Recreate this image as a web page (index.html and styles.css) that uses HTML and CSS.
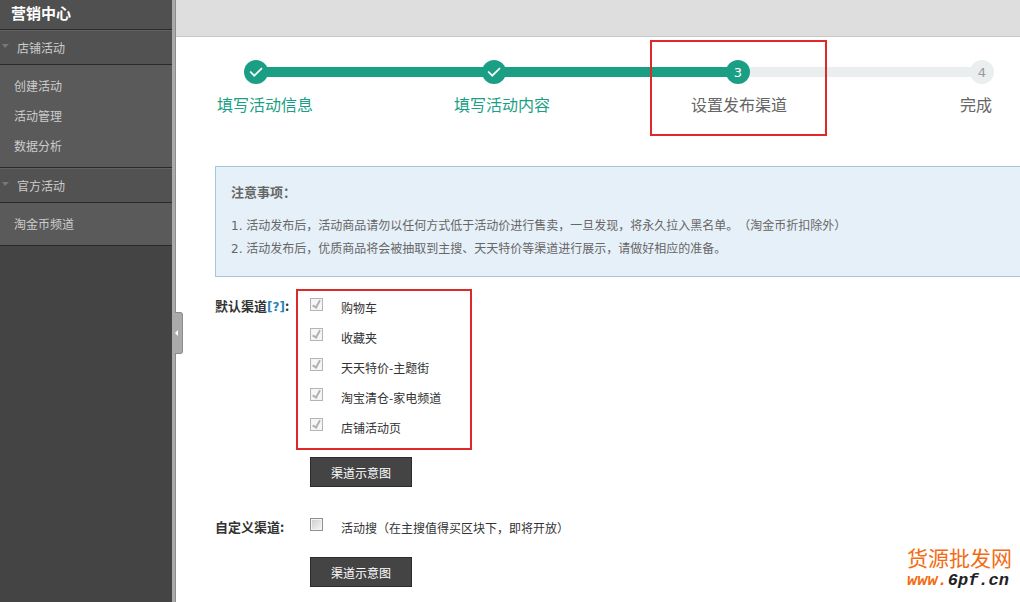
FILE: index.html
```html
<!DOCTYPE html>
<html lang="zh-CN">
<head>
    <meta charset="UTF-8">
    <meta name="viewport" content="width=device-width, initial-scale=1.0">
    <title>营销中心</title>
    <link rel="stylesheet" href="styles.css">
</head>
<body>

<aside class="sidebar">
    <h1>营销中心</h1>
    <nav>
        <h2>店铺活动</h2>
        <ul>
            <li><a href="#">创建活动</a></li>
            <li><a href="#">活动管理</a></li>
            <li><a href="#">数据分析</a></li>
        </ul>
        <h2>官方活动</h2>
        <ul>
            <li><a href="#">淘金币频道</a></li>
        </ul>
    </nav>
</aside>

<div class="splitter">
    <button type="button" class="toggle" aria-label="收起菜单"></button>
</div>

<div class="page">
    <header class="topbar"></header>

    <main>
        <section class="steps">
            <div class="track">
                <span class="node done"><svg width="14" height="12" viewBox="0 0 14 12"><path d="M1.2 5.5l4 4.2L13 2.2" fill="none" stroke="#fff" stroke-width="1.7"/></svg></span>
                <span class="line done first"></span>
                <span class="node done"><svg width="14" height="12" viewBox="0 0 14 12"><path d="M1.2 5.5l4 4.2L13 2.2" fill="none" stroke="#fff" stroke-width="1.7"/></svg></span>
                <span class="line done"></span>
                <span class="node done">3</span>
                <span class="line"></span>
                <span class="node">4</span>
            </div>
            <ol class="step-names">
                <li class="done">填写活动信息</li>
                <li class="done">填写活动内容</li>
                <li class="current">设置发布渠道</li>
                <li>完成</li>
            </ol>
        </section>

        <section class="notice">
            <h3>注意事项：</h3>
            <p>1. 活动发布后，活动商品请勿以任何方式低于活动价进行售卖，一旦发现，将永久拉入黑名单。（淘金币折扣除外）</p>
            <p>2. 活动发布后，优质商品将会被抽取到主搜、天天特价等渠道进行展示，请做好相应的准备。</p>
        </section>

        <form>
            <div class="form-row">
                <div class="form-label">默认渠道<a href="#">[?]</a>:</div>
                <div class="form-field">
                    <div class="options marked">
                        <label><input type="checkbox" checked disabled>购物车</label>
                        <label><input type="checkbox" checked disabled>收藏夹</label>
                        <label><input type="checkbox" checked disabled>天天特价-主题街</label>
                        <label><input type="checkbox" checked disabled>淘宝清仓-家电频道</label>
                        <label><input type="checkbox" checked disabled>店铺活动页</label>
                    </div>
                    <button type="button" class="btn">渠道示意图</button>
                </div>
            </div>
            <div class="form-row custom">
                <div class="form-label">自定义渠道:</div>
                <div class="form-field">
                    <div class="options">
                        <label><input type="checkbox">活动搜（在主搜值得买区块下，即将开放）</label>
                    </div>
                    <button type="button" class="btn">渠道示意图</button>
                </div>
            </div>
        </form>
    </main>
</div>

<div class="watermark">
    <div class="name">货源批发网</div>
    <div class="url">www.<span>6pf.cn</span></div>
</div>

</body>
</html>
```
FILE: styles.css
```css
*, *::before, *::after {
    box-sizing: border-box;
}

body {
    display: flex;
    min-height: 100vh;
    margin: 0;
    position: relative;
    overflow-x: hidden;
    background-color: #fff;
    color: #333;
    font-family: "Noto Sans CJK SC", sans-serif;
    font-size: 12px;
    text-spacing-trim: space-all;
}

h1, h2, h3, p, ul, ol {
    margin: 0;
    padding: 0;
    list-style: none;
}

/* sidebar */
.sidebar {
    flex: none;
    width: 172px;
    background-color: #444;
    color: #ccc;
}

.sidebar h1 {
    height: 30px;
    padding-left: 11px;
    border-bottom: 1px solid #2a2a2a;
    background-color: #505050;
    color: #fff;
    font-size: 15px;
    line-height: 26px;
}

.sidebar h2 {
    display: flex;
    align-items: center;
    height: 35px;
    padding-left: 2px;
    border-top: 1px solid #626262;
    border-bottom: 1px solid #2a2a2a;
    background-color: #525252;
    font-size: 12px;
    font-weight: normal;
}

.sidebar h2::before {
    content: "";
    margin: 0 8px 4px 0;
    border: 4px solid transparent;
    border-top-color: #777;
    border-bottom: 0;
    border-left-width: 3px;
}

.sidebar ul {
    padding: 6px 14px;
    border-bottom: 1px solid #2a2a2a;
    background-color: #5a5a5a;
}

.sidebar li {
    line-height: 30px;
}

.sidebar a {
    color: #ccc;
    text-decoration: none;
}

.splitter {
    flex: none;
    position: relative;
    width: 4px;
    border-right: 1px solid #8c8c8c;
    background-color: #aaa;
}

.toggle {
    position: absolute;
    top: 312px;
    left: 3px;
    width: 8px;
    height: 42px;
    padding: 0;
    border: 1px solid #8c8c8c;
    border-left: 0;
    border-radius: 0 3px 3px 0;
    background-color: #aaa;
}

.toggle::before {
    content: "";
    display: block;
    width: 0;
    border: 3px solid transparent;
    border-left: 0;
    border-right-color: #fff;
}

/* content */
.page {
    flex: 1;
    min-width: 0;
}

.topbar {
    height: 37px;
    border-bottom: 1px solid #c8c8c8;
    background-color: #dedede;
}

main {
    padding: 23px 0 15px 39px;
}

.track {
    display: flex;
    align-items: center;
    margin: 0 26px 0 29px;
}

.node {
    display: flex;
    align-items: center;
    justify-content: center;
    position: relative;
    z-index: 1;
    width: 24px;
    height: 24px;
    border-radius: 50%;
    background-color: #ebeeef;
    color: #999;
    font-family: "DejaVu Sans", sans-serif;
    font-size: 13px;
}

.node.done {
    background-color: #1a9f85;
    color: #fff;
}

.line {
    flex: 110;
    height: 10px;
    margin: 0 -2px;
    background-color: #ebeeef;
}

.line.first {
    flex-grow: 107;
}

.line.done {
    background-color: #1a9f85;
}

.step-names {
    display: flex;
    justify-content: space-between;
    margin: 8px -4px 0 2px;
    color: #666;
    font-size: 16px;
    line-height: 24px;
}

.step-names li {
    position: relative;
    width: 96px;
    text-align: center;
    white-space: nowrap;
}

.step-names .done {
    color: #1a9f85;
}

.step-names .current::after {
    content: "";
    position: absolute;
    z-index: 2;
    top: -52px;
    left: -41px;
    width: 177px;
    height: 96px;
    border: 2px solid #dc2a2a;
}

.notice {
    margin-top: 50px;
    padding: 13px 15px 15px;
    border: 1px solid #a3c8d6;
    border-right: 0;
    background-color: #e6f0f9;
    color: #666;
    line-height: 23px;
}

.notice h3 {
    margin-bottom: 12px;
    font-size: 13px;
}

.notice p {
    font-family: "DejaVu Sans", "Noto Sans CJK SC", sans-serif;
}

/* form */
form {
    margin-top: 12px;
}

.form-row {
    display: flex;
}

.form-row.custom {
    margin-top: 25px;
}

.form-label {
    width: 81px;
    font-size: 13px;
    font-weight: bold;
    line-height: 34px;
    white-space: nowrap;
}

.custom .form-label {
    line-height: 30px;
}

.form-label a {
    color: #2a86b8;
    font-family: "DejaVu Sans", sans-serif;
    font-size: 12px;
    text-decoration: none;
}

.options {
    padding-left: 14px;
}

.options.marked {
    width: 176px;
    padding: 1px 0 6px 12px;
    border: 2px solid #dc2a2a;
}

.options label {
    display: flex;
    align-items: center;
    height: 30px;
}

.options input {
    appearance: none;
    width: 13px;
    height: 13px;
    margin: 0 18px 5px 0;
    border: 1px solid #8f8f8f;
    background: linear-gradient(135deg, #ccc, #f6f6f6);
    box-shadow: inset 0 0 0 1px #f4f4f4;
}

.options input:disabled {
    border-color: #b5b5b5;
    background: #f6f6f6;
}

.options input:checked::after {
    content: "";
    display: block;
    width: 5px;
    height: 9px;
    margin-left: 3px;
    border: solid #b0b0b0;
    border-width: 0 2px 2px 0;
    transform: rotate(30deg);
}

.btn {
    display: block;
    width: 102px;
    height: 30px;
    margin: 15px 0 0 14px;
    padding: 0;
    border: 1px solid #2c2c2c;
    background-color: #444;
    color: #fff;
    font-family: inherit;
    font-size: 12px;
}

.marked + .btn {
    margin-top: 7px;
}

/* site mark laid over the page corner */
.watermark {
    position: absolute;
    right: 8px;
    bottom: 10px;
    color: #f36c14;
}

.watermark .name {
    font-size: 21px;
    line-height: 26px;
}

.watermark .url {
    font-family: "Liberation Mono", monospace;
    font-size: 17px;
    font-style: italic;
    font-weight: bold;
    line-height: 22px;
}

.watermark span {
    color: #222;
}
```
